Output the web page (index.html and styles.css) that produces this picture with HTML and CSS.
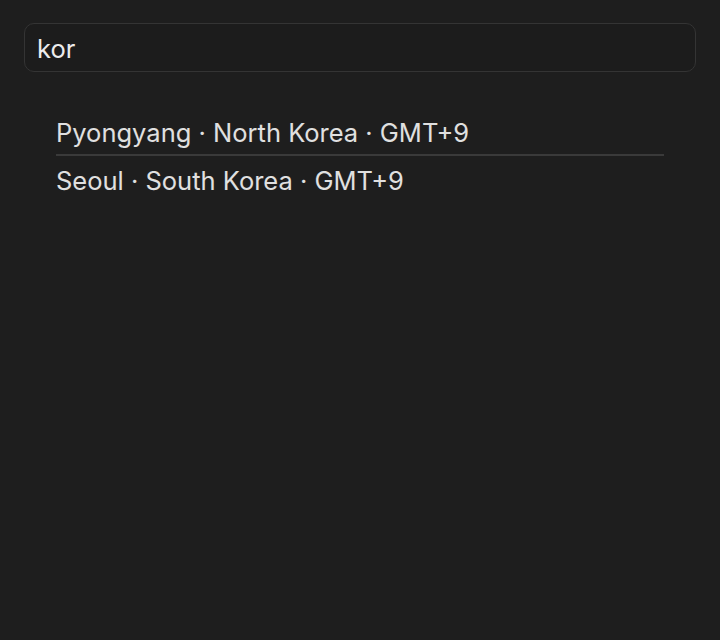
FILE: index.html
```html
<!DOCTYPE html>
<html lang="en">
<head>
<meta charset="utf-8">
<title>Time zone search</title>
<link rel="stylesheet" href="styles.css">
</head>
<body>
<main class="panel">
  <div class="search">
    <span class="search-text">kor</span>
  </div>
  <ul class="results">
    <li class="result">Pyongyang · North Korea · GMT+9</li>
    <li class="result">Seoul · South Korea · GMT+9</li>
  </ul>
</main>
</body>
</html>
```

FILE: styles.css
```css
html, body {
  margin: 0;
  padding: 0;
  background: #1e1e1e;
  height: 100%;
}
body {
  font-family: Inter, "Noto Sans", "Liberation Sans", sans-serif;
  color: #e2e2e2;
}
.panel {
  padding: 23px 24px 0 24px;
}
.search {
  box-sizing: border-box;
  height: 49px;
  border: 1px solid #343434;
  border-radius: 10px;
  background: #1c1c1c;
  display: flex;
  align-items: center;
  padding: 2px 12px 0 12px;
}
.search-text {
  font-size: 25.5px;
  color: #ececec;
}
.results {
  list-style: none;
  margin: 46px 32px 0 32px;
  padding: 0;
}
.result {
  font-size: 25.5px;
  line-height: 30px;
  padding: 0 0 6px 0;
  color: #e0e0e0;
}
.result + .result {
  border-top: 2px solid #3a3a3a;
  padding-top: 10px;
}
```
